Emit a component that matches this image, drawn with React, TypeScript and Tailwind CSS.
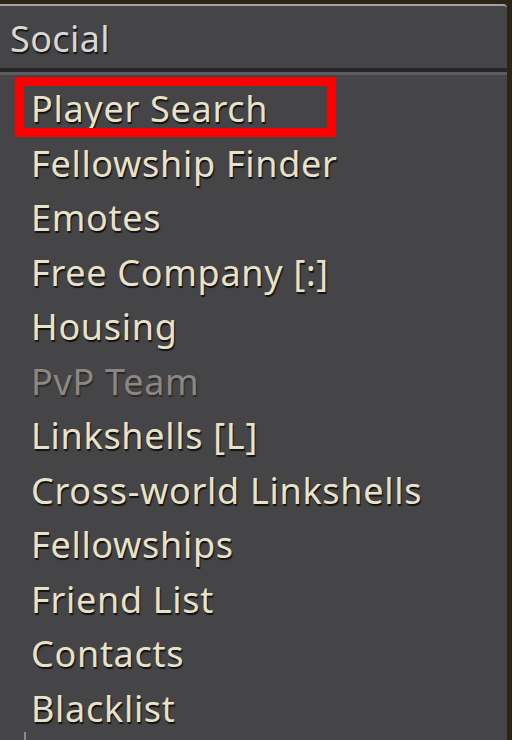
import React from "react";

const items: { label: string; disabled?: boolean }[] = [
  { label: "Player Search" },
  { label: "Fellowship Finder" },
  { label: "Emotes" },
  { label: "Free Company [:]" },
  { label: "Housing" },
  { label: "PvP Team", disabled: true },
  { label: "Linkshells [L]" },
  { label: "Cross-world Linkshells" },
  { label: "Fellowships" },
  { label: "Friend List" },
  { label: "Contacts" },
  { label: "Blacklist" },
];

export default function App() {
  return (
    <div className="relative w-[512px] h-[740px] overflow-hidden bg-[#2a2419] font-['Noto_Sans','Open_Sans',sans-serif]">
      <div className="mt-[4px] mr-[5px] h-[736px] bg-[#454446] border-t-2 border-[#a3a2a3] rounded-tr-[4px] flex flex-col">
        <div className="h-[62px] pt-[4px] pl-[10px] text-[36px] leading-[58px] tracking-[0.4px] text-[#d8d7d6] [text-shadow:1px_2px_1px_#151414]">
          Social
        </div>
        <div className="h-[4px] bg-[#262527]" />
        <div className="h-[3px] bg-[#5d5c5e]" />
        <ul className="pt-[7px] pl-[31px] flex flex-col">
          {items.map((it) => (
            <li
              key={it.label}
              className={
                it.disabled
                  ? "h-[54.5px] text-[36px] leading-[54.5px] tracking-[0.7px] whitespace-nowrap text-[#8b8884] [text-shadow:1px_2px_1px_#2a2929]"
                  : "h-[54.5px] text-[36px] leading-[54.5px] tracking-[0.7px] whitespace-nowrap text-[#e9e2cb] [text-shadow:1px_2px_1px_#121110]"
              }
            >
              {it.label}
            </li>
          ))}
        </ul>
      </div>
      <div className="absolute left-[15px] top-[77px] w-[321px] h-[60px] border-[9px] border-[#ff0000]" />
      <div className="absolute left-[24px] top-[732px] w-[2px] h-[8px] bg-[#8d8c8d]" />
    </div>
  );
}
